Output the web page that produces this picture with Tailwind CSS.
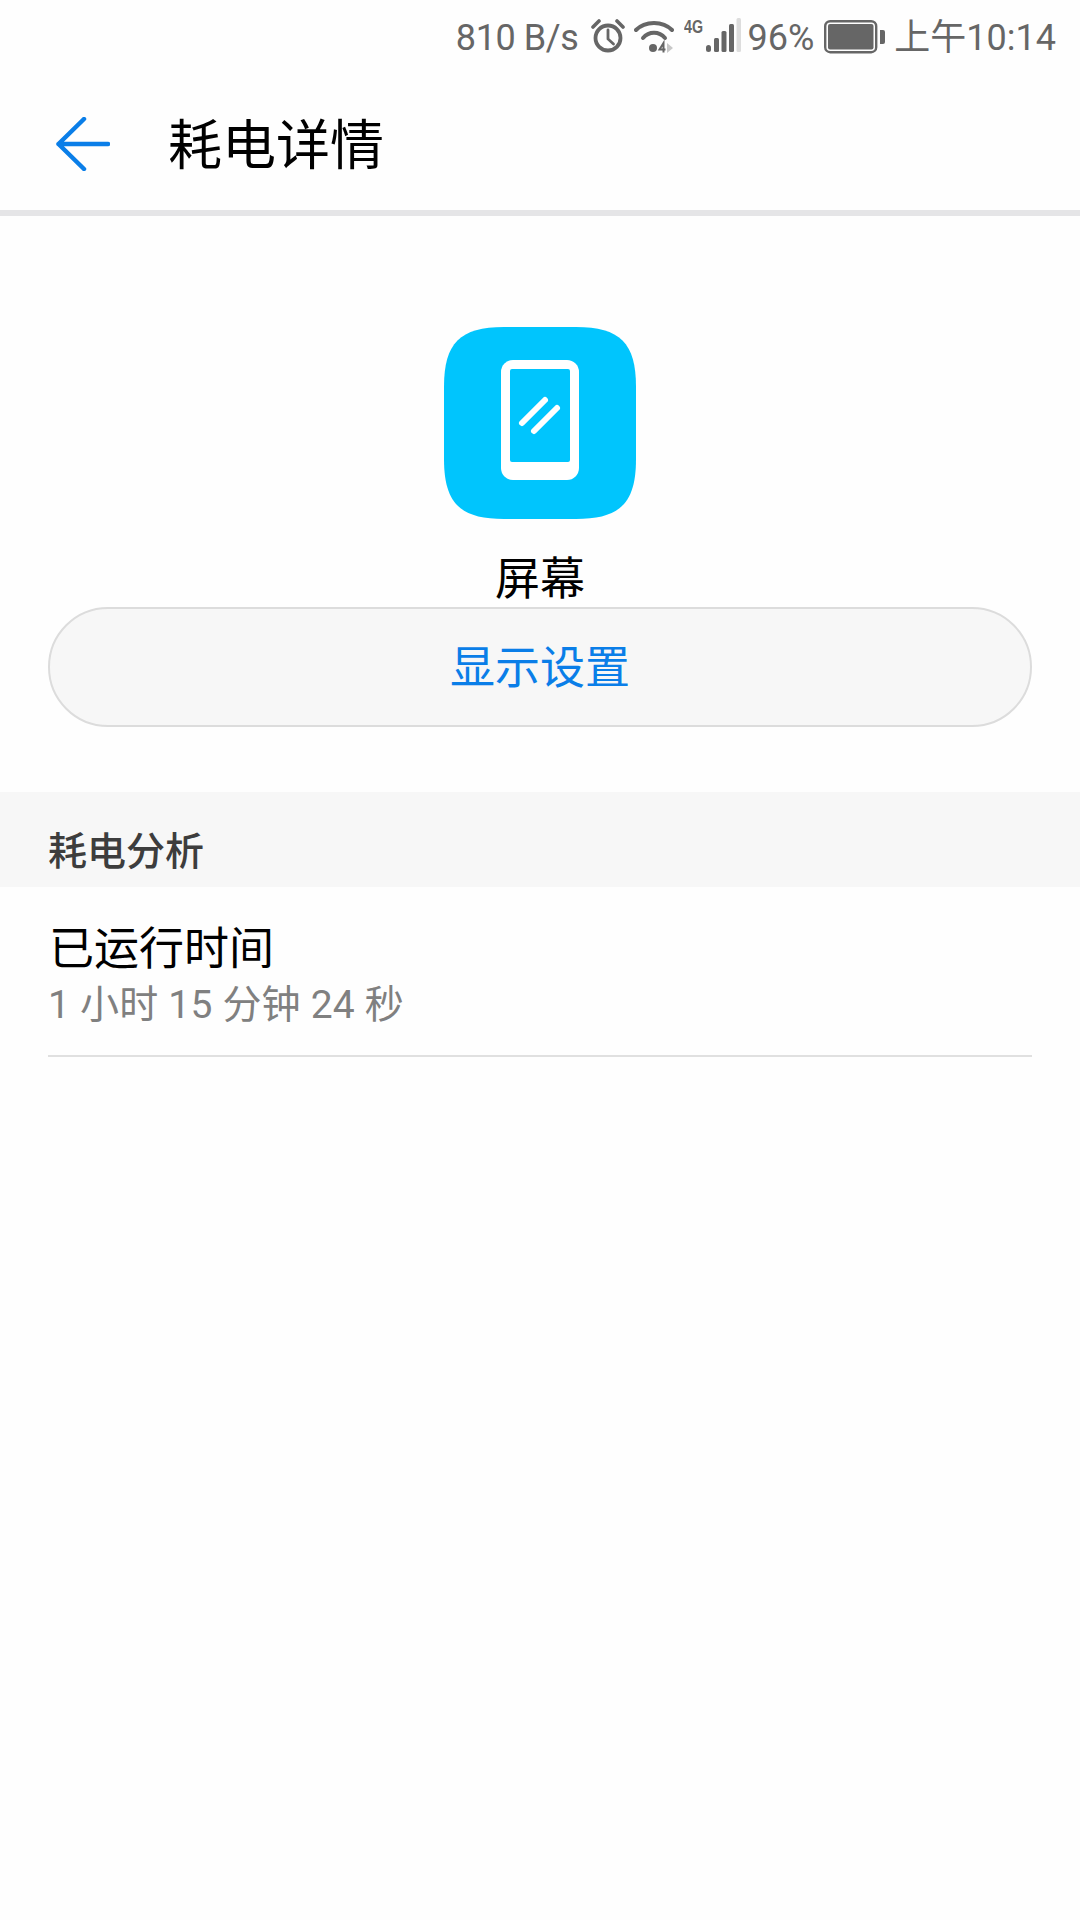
<!DOCTYPE html>
<html lang="zh-CN">
<head>
<meta charset="utf-8">
<script src="https://cdn.jsdelivr.net/npm/@tailwindcss/browser@4"></script>
</head>
<body class="bg-[#fefefe] font-[Roboto,'Noto_Sans_CJK_SC',sans-serif]">
<div class="w-[1080px] h-[1920px] flex flex-col overflow-hidden">
  <div class="h-[72px] pt-[4px] flex items-center justify-end pr-[24px] text-[36px] leading-[72px] text-[#666666]">
    <span class="tracking-[-0.4px]">810 B/s</span>
    <svg class="ml-[12px] w-[34px] h-[34px] -mt-[5px]" viewBox="0 0 34 34" fill="none" stroke="#666666"><circle cx="17" cy="19" r="12.500" stroke-width="3.800"/><path d="M17 11v9l5.500 5" stroke-width="2.800" stroke-linecap="round"/><path d="M2 8l6-6M32 8l-6-6" stroke-width="3.600" stroke-linecap="round"/></svg>
    <svg class="ml-[9px] w-[40px] h-[34px] -mt-[5px]" viewBox="0 0 40 34" fill="none"><path d="M2 11C11 1.500 29 1.500 38 11" stroke="#666666" stroke-width="4" stroke-linecap="round"/><path d="M9 19C15 12 25 12 31 19" stroke="#666666" stroke-width="4" stroke-linecap="round"/><circle cx="19" cy="29" r="4" fill="#666666"/><path d="M29.500 33.500V24l-4 6.500h6" stroke="#666666" stroke-width="2"/><path d="M33 24l6 5-6 5z" fill="#c8c8c8"/></svg>
    <div class="ml-[10px] w-[18px] h-[34px] -mt-[7px] relative overflow-visible"><span class="absolute left-0 top-0 text-[19px] leading-[17px] font-bold origin-left scale-x-75 [font-family:'Liberation_Sans']">4G</span></div>
    <svg class="ml-[4px] w-[35px] h-[34px] -mt-[7px]" viewBox="0 0 35 34" fill="#666666"><rect x="0" y="27" width="5" height="7" rx="2.500"/><rect x="8" y="20" width="5" height="14" rx="1.500"/><rect x="15.500" y="13" width="5" height="21" rx="1.500"/><rect x="23" y="6" width="5" height="28" rx="1.500"/><rect x="30.500" y="0" width="4.500" height="34" rx="1.500" fill="#dddddd"/></svg>
    <span class="ml-[7px]">96%</span>
    <svg class="ml-[10px] w-[61px] h-[34px] -mt-[3px]" viewBox="0 0 61 34" fill="none"><rect x="1.200" y="1.200" width="51" height="31" rx="5" stroke="#666666" stroke-width="2.400"/><rect x="4" y="4" width="45.500" height="25.500" rx="2" fill="#666666"/><path d="M56 10h3a2 2 0 0 1 2 2v10a2 2 0 0 1-2 2h-3z" fill="#666666"/></svg>
    <span class="ml-[9px]">上午10:14</span>
  </div>

  <div class="h-[144px] flex items-center border-b-[6px] border-[#e5e5e7]">
    <svg class="ml-[56px] mt-[5px] w-[54px] h-[54px]" viewBox="0 0 54 54" fill="none" stroke="#0a7ee8" stroke-width="4.500" stroke-linecap="round" stroke-linejoin="round"><path d="M28 2 2.500 27 28 52M2.500 27H52"/></svg>
    <h1 class="ml-[58px] mt-[12px] text-[54px] leading-[60px] font-normal text-black">耗电详情</h1>
  </div>

  <div class="flex flex-col items-center">
    <svg class="mt-[111px] w-[192px] h-[192px]" viewBox="0 0 192 192" fill="none">
      <path d="M60 0H132C176 0 192 16 192 60V132C192 176 176 192 132 192H60C16 192 0 176 0 132V60C0 16 16 0 60 0Z" fill="#00c5fd"/>
      <rect x="57" y="33" width="78" height="120" rx="12" fill="#ffffff"/>
      <rect x="66" y="42" width="60" height="93" rx="2" fill="#00c5fd"/>
      <path d="M78 96 101 73M90 104 113 81" stroke="#ffffff" stroke-width="6" stroke-linecap="round"/>
    </svg>
    <div class="mt-[26px] h-[63px] text-[45px] leading-[69px] text-black">屏幕</div>
  </div>

  <button class="mx-[48px] h-[120px] pt-[4px] rounded-full border-2 border-[#dcdcdc] bg-[#f7f7f7] text-[45px] leading-[60px] text-[#0a7ee8] -mt-[1px]">显示设置</button>

  <div class="mt-[65px] h-[95px] bg-[#f7f7f7] pl-[48px] pt-[36px] text-[39px] leading-[48px] font-medium text-[#3d3d3d]">耗电分析</div>

  <div class="mx-[48px] h-[170px] border-b-2 border-[#e0e0e0] pt-[33px]">
    <div class="text-[45px] leading-[60px] text-black pl-[1px]">已运行时间</div>
    <div class="text-[39px] leading-[50px] text-[#808080] tracking-[0.2px]">1 小时 15 分钟 24 秒</div>
  </div>
</div>
</body>
</html>
